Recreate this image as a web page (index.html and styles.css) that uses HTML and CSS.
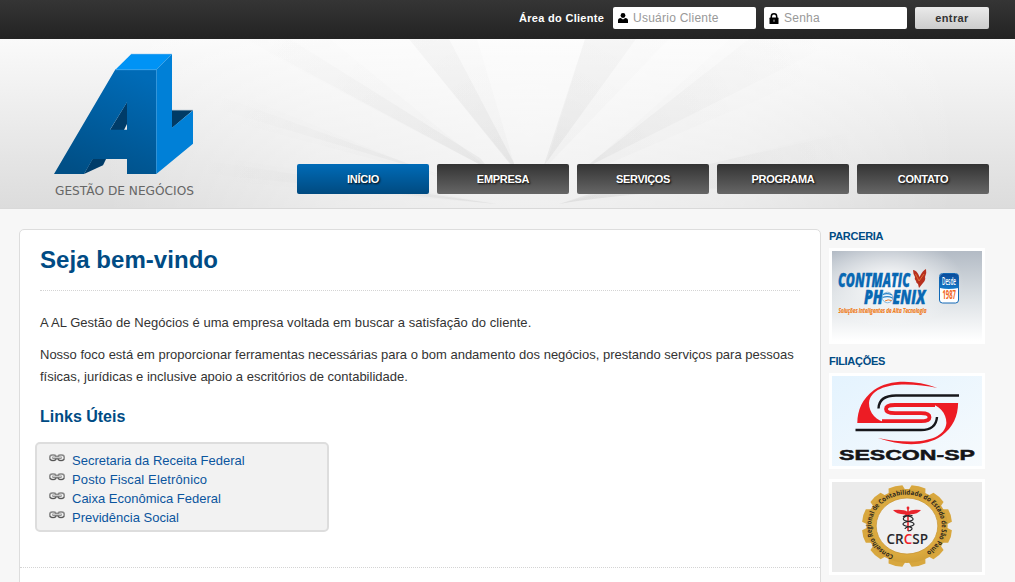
FILE: index.html
```html
<!DOCTYPE html>
<html lang="pt-BR">
<head>
<meta charset="utf-8">
<title>AL Gestão de Negócios</title>
<link rel="stylesheet" href="styles.css">
</head>
<body>
<div class="topbar">
  <form class="login">
    <label class="login-label">Área do Cliente</label>
    <div class="field">
      <svg width="10" height="10" viewBox="0 0 10 10"><circle cx="5" cy="2.5" r="2.4"/><path d="M0 10V7.5Q0 5.1 2.7 4.900L5 6.6 7.3 4.900Q10 5.1 10 7.5V10Z"/></svg>
      <span>Usuário Cliente</span>
    </div>
    <div class="field">
      <svg width="10" height="11" viewBox="0 0 10 11"><path d="M2.3 5V3.4a2.7 2.6 0 0 1 5.4 0V5" fill="none" stroke="#000" stroke-width="1.5"/><rect x=".5" y="4.6" width="9" height="6.4" rx=".6"/><path d="M5 6.6v2.2" stroke="#bbb" stroke-width="1"/></svg>
      <span>Senha</span>
    </div>
    <button class="enter" type="button">entrar</button>
  </form>
</div>
<header class="header">
  <svg class="rays" width="1015" height="170" viewBox="0 39 1015 170">
    <defs>
      <radialGradient id="glow" gradientUnits="userSpaceOnUse" cx="530" cy="130" r="430">
        <stop offset="0" stop-color="#fff" stop-opacity=".62"/><stop offset=".5" stop-color="#fff" stop-opacity=".42"/><stop offset="1" stop-color="#fff" stop-opacity="0"/>
      </radialGradient>
      <radialGradient id="ray" gradientUnits="userSpaceOnUse" cx="530" cy="200" r="340">
        <stop offset="0" stop-color="#000" stop-opacity=".055"/><stop offset=".35" stop-color="#000" stop-opacity=".028"/><stop offset=".65" stop-color="#000" stop-opacity=".015"/><stop offset="1" stop-color="#000" stop-opacity="0"/>
      </radialGradient>
    </defs>
    <rect y="39" width="1015" height="170" fill="url(#glow)"/>
    <g fill="url(#ray)">
      <path d="M409 39H449L514 163V169Z"/><path d="M409 39H477L516 170Z" opacity=".4"/>
      <path d="M585 39H636L546 163 543 168Z"/><path d="M585 39H669L545 168Z" opacity=".4"/>
      <path d="M245 39H290L480 158 490 170Z"/><path d="M240 39H330L490 170Z" opacity=".4"/>
      <path d="M749 39H842L595 163 575 175Z"/><path d="M730 39H900L575 178Z" opacity=".4"/>
      <path d="M170 78V95L440 175Z"/><path d="M170 66V105L440 177Z" opacity=".4"/>
      <path d="M180 157V171L496 204Z"/><path d="M180 150V178L497 204Z" opacity=".4"/>
      <path d="M559 204L620 184 860 130V185Q650 188 559 204Z"/>
      <path d="M559 204L650 180 1015 85V170Q650 188 559 204Z" opacity=".5"/>
    </g>
  </svg>
  <div class="header-inner">
    <svg class="logo" width="146" height="150" viewBox="52 50 146 150">
      <defs><linearGradient id="front" x1=".7" y1="0" x2=".3" y2="1"><stop offset="0" stop-color="#006bb7"/><stop offset="1" stop-color="#004f86"/></linearGradient></defs>
      <path d="M92.7 158.5H106.3L103 165.3 84 174Z" fill="#003c69"/>
      <path d="M172 110.3H193L172 128Z" fill="#003b66"/>
      <path d="M127 102L110 130H124L127 124Z" fill="#003c69"/>
      <path fill-rule="evenodd" d="M115.3 69.5H156.3V174H127V159H92.7L84 174H54ZM127 102.3L110 129.8H127Z" fill="url(#front)"/>
      <path d="M115.3 69.7L131.3 54H172L156.3 69.7Z" fill="#0093f5"/>
      <path d="M156.3 69.7L172 54V127.7L193 110.5V143.7L156.3 174Z" fill="#0080d7"/>
      <path d="M115.3 69.7H156.3M131 54.3H172" stroke="#46a8ed" stroke-width=".7"/>
      <path d="M172 110.3H193" stroke="#6d8fa8" stroke-width=".6"/>
      <text x="55" y="195" textLength="139" lengthAdjust="spacingAndGlyphs" class="logo-text">GESTÃO DE NEGÓCIOS</text>
    </svg>
    <nav class="nav">
      <a class="active">INÍCIO</a><a>EMPRESA</a><a>SERVIÇOS</a><a>PROGRAMA</a><a>CONTATO</a>
    </nav>
  </div>
</header>
<div class="page">
  <main class="content">
    <h1>Seja bem-vindo</h1>
    <p class="intro">A AL Gestão de Negócios é uma empresa voltada em buscar a satisfação do cliente.</p>
    <p>Nosso foco está em proporcionar ferramentas necessárias para o bom andamento dos negócios, prestando serviços para pessoas<br>físicas, jurídicas e inclusive apoio a escritórios de contabilidade.</p>
    <h2>Links Úteis</h2>
    <svg width="0" height="0" class="defs"><defs><g id="chain" fill="none"><rect x=".8" y=".9" width="6.4" height="5.6" rx="2.4" stroke="#888" stroke-width="1.5"/><rect x="8.8" y=".9" width="6.4" height="5.6" rx="2.4" stroke="#888" stroke-width="1.5"/><path d="M1 5Q1.6 6.5 3 6.5H5Q6.6 6.5 7 5M9 5Q9.6 6.5 11 6.5H13Q14.6 6.5 15 5" stroke="#555"/><path d="M3.4 3.7H12.6" stroke="#777" stroke-width="2.2"/><path d="M4 3.5H12" stroke="#ddd" stroke-width=".8"/></g></defs></svg>
    <ul class="links">
      <li><svg width="16" height="8"><use href="#chain"/></svg><a>Secretaria da Receita Federal</a></li>
      <li><svg width="16" height="8"><use href="#chain"/></svg><a class="wide">Posto Fiscal Eletrônico</a></li>
      <li><svg width="16" height="8"><use href="#chain"/></svg><a>Caixa Econômica Federal</a></li>
      <li><svg width="16" height="8"><use href="#chain"/></svg><a>Previdência Social</a></li>
    </ul>
    <div class="rule"></div>
  </main>
  <aside class="side">
    <h3>PARCERIA</h3>
    <svg class="card" width="150" height="90" viewBox="832 251 150 90">
      <defs>
        <linearGradient id="sky" x1="0" y1="0" x2="0" y2="1"><stop offset="0" stop-color="#b3bbc5"/><stop offset=".5" stop-color="#dadfe3"/><stop offset="1" stop-color="#fff"/></linearGradient>
        <radialGradient id="shine" cx=".38" cy=".35" r=".5"><stop offset="0" stop-color="#fff" stop-opacity=".95"/><stop offset="1" stop-color="#fff" stop-opacity="0"/></radialGradient>
        <linearGradient id="badge" x1="0" y1="0" x2="0" y2="1"><stop offset="0" stop-color="#0b4c9b"/><stop offset="1" stop-color="#1379c8"/></linearGradient>
      </defs>
      <rect x="832" y="251" width="150" height="90" fill="url(#sky)"/><rect x="832" y="251" width="150" height="90" fill="url(#shine)"/>
      <g class="brand"><text x="838" y="286.5" textLength="72" lengthAdjust="spacingAndGlyphs">CONTMATIC</text>
      <text x="864" y="303.5" textLength="19" lengthAdjust="spacingAndGlyphs">PH</text><text x="892.5" y="303.5" textLength="33" lengthAdjust="spacingAndGlyphs">ENIX</text></g>
      <circle cx="887.5" cy="297.5" r="5.3" fill="#edf6fb" stroke="#69a9d6" stroke-width=".8"/>
      <path d="M883 294.5Q887 292.5 892 295M882.5 297.5Q888 295.5 892.5 298" stroke="#2b84c7" stroke-width="1.1" fill="none"/><path d="M885 301Q888 299 891.5 300.5" stroke="#e8792a" fill="none"/>
      <path d="M926 269Q923 270 919.5 277Q917 270 913 270Q913 274 915 277Q914 279 916 281Q916 283 918 284L919 288L923 283Q926 280 925 277Q927 273 926 269Z" fill="#b7301f"/><path d="M915.500 274L919 281 924 274" fill="none" stroke="#ef8b3b" stroke-width=".7"/>
      <text x="838.5" y="312.5" class="slogan" textLength="88" lengthAdjust="spacingAndGlyphs">Soluções Inteligentes de Alta Tecnologia</text>
      <rect x="939.5" y="273.5" width="19" height="29.5" rx="3" fill="#fff" stroke="#1269b6"/>
      <path d="M940 288V276.5Q940 274 942.5 274H956Q958.5 274 958.5 276.5V288Q948 290 940 288Z" fill="url(#badge)"/>
      <text x="942" y="285" class="since" textLength="14" lengthAdjust="spacingAndGlyphs">Desde</text>
      <text x="942.5" y="299.3" class="year" textLength="13.5" lengthAdjust="spacingAndGlyphs">1987</text>
    </svg>
    <h3 class="second">FILIAÇÕES</h3>
    <svg class="card" width="150" height="90" viewBox="832 376 150 90">
      <defs><linearGradient id="pale" x1="0" y1="0" x2="1" y2="1"><stop offset="0" stop-color="#e4f3fe"/><stop offset="1" stop-color="#f6fafd"/></linearGradient>
      <path id="crescent" d="M937.5 388C915 380 890 379 874 390C862 399 857.500 410 857.300 423H888C876 421 869 413 869 403C870 390 886 384.500 905 384.500Q922 384.500 937.500 388Z" fill="#ed1c24"/></defs>
      <rect x="832" y="376" width="150" height="90" fill="url(#pale)"/>
      <use href="#crescent"/><use href="#crescent" transform="rotate(180 907.7 413)"/>
      <path d="M935 405H895Q886 405 886 409T895 413.200H921Q929.500 413.200 929.500 417.200T921 421.200H882" fill="none" stroke="#ed1c24" stroke-width="3.800"/>
      <path d="M878.5 408.5Q879 395.5 896 395.5H959" stroke="#17171b" stroke-width="2.4" fill="none"/>
      <path d="M937 417Q936 430 921 430H855.500" stroke="#17171b" stroke-width="2.4" fill="none"/>
      <text x="839" y="460" textLength="136" lengthAdjust="spacingAndGlyphs" class="sescon">SESCON-SP</text>
    </svg>
    <svg class="card last" width="150" height="90" viewBox="832 482 150 90">
      <defs><path id="ring" d="M895.500 556A32 31.500 0 1 1 922 554.500"/><radialGradient id="gold"><stop offset=".7" stop-color="#dfae42"/><stop offset="1" stop-color="#d1a039"/></radialGradient>
      <path id="tooth" d="M899.500 492L901 486Q907.500 484.500 914 486L915.500 492Z"/></defs>
      <rect x="832" y="482" width="150" height="90" fill="#ebebeb"/>
      <g transform="translate(907 526) scale(1.1 1) translate(-907.5 -526.5)">
        <g fill="#d8a73e" transform="rotate(15 907.5 526.5)">
          <use href="#tooth"/><use href="#tooth" transform="rotate(30 907.5 526.5)"/><use href="#tooth" transform="rotate(60 907.5 526.5)"/><use href="#tooth" transform="rotate(90 907.5 526.5)"/><use href="#tooth" transform="rotate(120 907.5 526.5)"/><use href="#tooth" transform="rotate(150 907.5 526.5)"/><use href="#tooth" transform="rotate(180 907.5 526.5)"/><use href="#tooth" transform="rotate(210 907.5 526.5)"/><use href="#tooth" transform="rotate(240 907.5 526.5)"/><use href="#tooth" transform="rotate(270 907.5 526.5)"/><use href="#tooth" transform="rotate(300 907.5 526.5)"/><use href="#tooth" transform="rotate(330 907.5 526.5)"/>
        </g>
        <circle cx="907.5" cy="526.5" r="37" fill="url(#gold)"/><circle cx="907.5" cy="526.5" r="28" fill="#f0f0f0" stroke="#c89532" stroke-width=".7"/>
        <text class="ring-text"><textPath href="#ring" textLength="168" lengthAdjust="spacingAndGlyphs">Conselho Regional de Contabilidade do Estado de São Paulo</textPath></text>
      </g>
      <path d="M907 511.500Q904 509 893 510Q896 514 905 514.500L907 517 910 514.500Q918 514 921 510Q911 509 909 511.500Z" fill="#e9252d"/><path d="M908 508V531" stroke="#e9252d" stroke-width="1.6"/><circle cx="908" cy="508" r="1.400" fill="#e9252d"/>
      <path d="M903 517C905 514 914 517 913 519.500C912 522 903 521 903 524C903 527 913 526 912 529Q911 531 908 531M912.500 516C910 514 902 517 903.500 519.500C905 522 914 521 914 524C914 527 905 526 905 529" fill="none" stroke="#242428" stroke-width="1.200"/>
      <text x="886.500" y="544" class="crc" textLength="41.500" lengthAdjust="spacingAndGlyphs">CR<tspan fill="#ef2026">C</tspan>SP</text>
    </svg>
  </aside>
</div>
</body>
</html>
```
FILE: styles.css
```css
* { box-sizing: border-box; }
body { margin: 0; height: 582px; overflow: hidden; background: #f7f7f7; font: 13px/22px "Liberation Sans", Arial, sans-serif; color: #333; }
svg { display: block; flex: none; }
.topbar { height: 39px; padding: 7px 26px 0 0; background: linear-gradient(#353535, #232323); }
.login { display: flex; justify-content: flex-end; gap: 8px; }
.login-label { color: #fff; font-weight: bold; font-size: 11px; line-height: 22px; width: 86px; white-space: nowrap; letter-spacing: .3px; }
.field { width: 143px; height: 22px; padding: 0 5px; background: #fff; border-radius: 2px; display: flex; align-items: center; gap: 5px; color: #999; font-size: 12px; letter-spacing: .25px; line-height: 23px; }
.enter { width: 74px; height: 22px; border: 0; padding: 0; border-radius: 2px; background: linear-gradient(#eaeaea, #ccc); color: #333; font: bold 11px "Liberation Sans", Arial, sans-serif; letter-spacing: .4px; }
.header { display: grid; height: 170px; background: linear-gradient(#fafafa, #dcdcdc); border-bottom: 1px solid #d9d9d9; overflow: hidden; }
.rays, .header-inner { grid-area: 1 / 1; }
.header-inner { display: flex; justify-content: space-between; padding: 11px 26px 0 52px; }
.logo-text { font: 12px "DejaVu Sans", sans-serif; fill: #666; }
.nav { display: flex; gap: 8px; padding-top: 114px; }
.nav a { width: 132px; height: 30px; border-radius: 2px; background: linear-gradient(#333, #666); color: #fff; font-weight: bold; font-size: 11px; line-height: 31px; text-align: center; letter-spacing: -.3px; text-shadow: 1px 1px 2px #000; }
.nav a.active { background: linear-gradient(#006bb7, #004a80); }
.page { display: flex; gap: 8px; padding: 20px 0 0 19px; }
.content { width: 802px; height: 380px; padding: 0 20px; background: #fff; border: 1px solid #ddd; border-radius: 5px; }
h1, h2, h3, p, ul { margin: 0; }
h1 { height: 61px; padding-top: 14px; border-bottom: 1px dotted #d4d4d4; color: #004b84; font-size: 24px; line-height: 32px; letter-spacing: .05px; }
p { margin-bottom: 10px; white-space: nowrap; }
.intro { padding-top: 21px; letter-spacing: .05px; }
h2 { font-size: 16px; line-height: 22px; color: #004b84; margin-top: 18px; }
.defs { height: 0; }
.links { list-style: none; width: 294px; height: 90px; margin: 14px 0 0 -5px; padding: 7px 0 0 12px; background: #f2f2f2; border: 2px solid #ddd; border-radius: 5px; }
.links li { display: flex; gap: 7px; height: 19px; line-height: 19px; }
.links svg { margin-top: 3px; }
.links a { color: #0b559e; }
.links .wide { letter-spacing: .13px; }
.rule { margin: 35px -20px 0; border-top: 1px dotted #d4d4d4; }
.side { width: 156px; }
h3 { color: #004b84; font-size: 11px; line-height: 14px; font-weight: bold; letter-spacing: -.3px; margin-bottom: 5px; }
h3.second { margin-top: 10px; }
.card { width: 156px; height: 96px; border: 3px solid #fff; }
.last { margin-top: 10px; }
.brand { font: italic 800 20px "Open Sans", sans-serif; fill: #0868b3; stroke: #0868b3; stroke-width: .4px; }
.slogan { font: italic bold 7px "Open Sans", sans-serif; fill: #f07c20; stroke: #f07c20; stroke-width: .2px; }
.since { font: 600 10.5px "Open Sans", sans-serif; fill: #fff; }
.year { font: bold 11.5px "Open Sans", sans-serif; fill: #f26522; }
.sescon { font: bold 15.5px "Liberation Sans", sans-serif; fill: #141418; stroke: #141418; stroke-width: .5px; }
.ring-text { font: bold 6.5px "Open Sans", sans-serif; fill: #2e281e; }
.crc { font: 600 14px "Open Sans", sans-serif; fill: #29292c; }
```
